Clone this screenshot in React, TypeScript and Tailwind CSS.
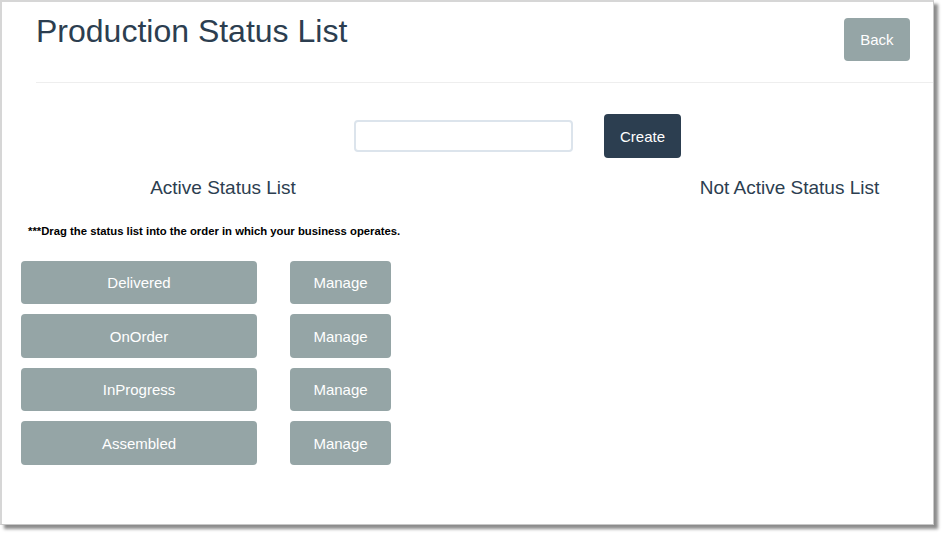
import React from "react";

const statuses = ["Delivered", "OnOrder", "InProgress", "Assembled"];

export default function App() {
  return (
    <div className="w-[944px] h-[535px] bg-white overflow-hidden" style={{ fontFamily: '"Liberation Sans", Arial, sans-serif' }}>
      <div className="w-[934px] h-[525px] bg-white border-t-2 border-l-2 border-r border-b border-t-[#d6d6d6] border-l-[#d6d6d6] border-r-[#c8c8c8] border-b-[#c8c8c8] shadow-[4px_4px_3px_rgba(0,0,0,0.45)]">
        {/* Header */}
        <div className="ml-[34px] h-[81px] flex justify-between items-start border-b border-[#eeeeee] pr-[23px]">
          <h1 className="mt-[12px] text-[32px] leading-[1.1] text-[#2c3e50] font-normal">Production Status List</h1>
          <button className="mt-[16px] h-[43px] px-[16.5px] rounded-[4px] bg-[#95a5a6] text-white text-[15px] leading-[21px]">Back</button>
        </div>

        {/* Create row */}
        <div className="ml-[352px] mt-[31px] flex items-center">
          <input className="w-[219px] h-[32px] border-2 border-[#dce4ec] rounded-[4px] outline-none px-2 text-[15px]" />
          <button className="ml-[31px] h-[44px] px-[16px] rounded-[4px] bg-[#2c3e50] text-white text-[15px] leading-[21px]">Create</button>
        </div>

        {/* Headings */}
        <div className="mt-[18px] flex justify-between">
          <div className="w-[442px] text-center text-[19px] leading-[24px] text-[#2c3e50]">Active Status List</div>
          <div className="w-[287px] text-center text-[19px] leading-[24px] text-[#2c3e50]">Not Active Status List</div>
        </div>

        {/* Note */}
        <div className="mt-[24px] ml-[26px] text-[11.3px] leading-[14px] font-bold text-black">
          ***Drag the status list into the order in which your business operates.
        </div>

        {/* Status list */}
        <div className="mt-[23px] ml-[19px] flex flex-col gap-[10px]">
          {statuses.map((s) => (
            <div key={s} className="flex gap-[33px]">
              <div className="w-[236px] h-[43.4px] pt-[2px] rounded-[4px] bg-[#95a5a6] text-white text-[15px] flex items-center justify-center">{s}</div>
              <div className="w-[101px] h-[43.4px] pt-[2px] rounded-[4px] bg-[#95a5a6] text-white text-[15px] flex items-center justify-center">Manage</div>
            </div>
          ))}
        </div>
      </div>
    </div>
  );
}
